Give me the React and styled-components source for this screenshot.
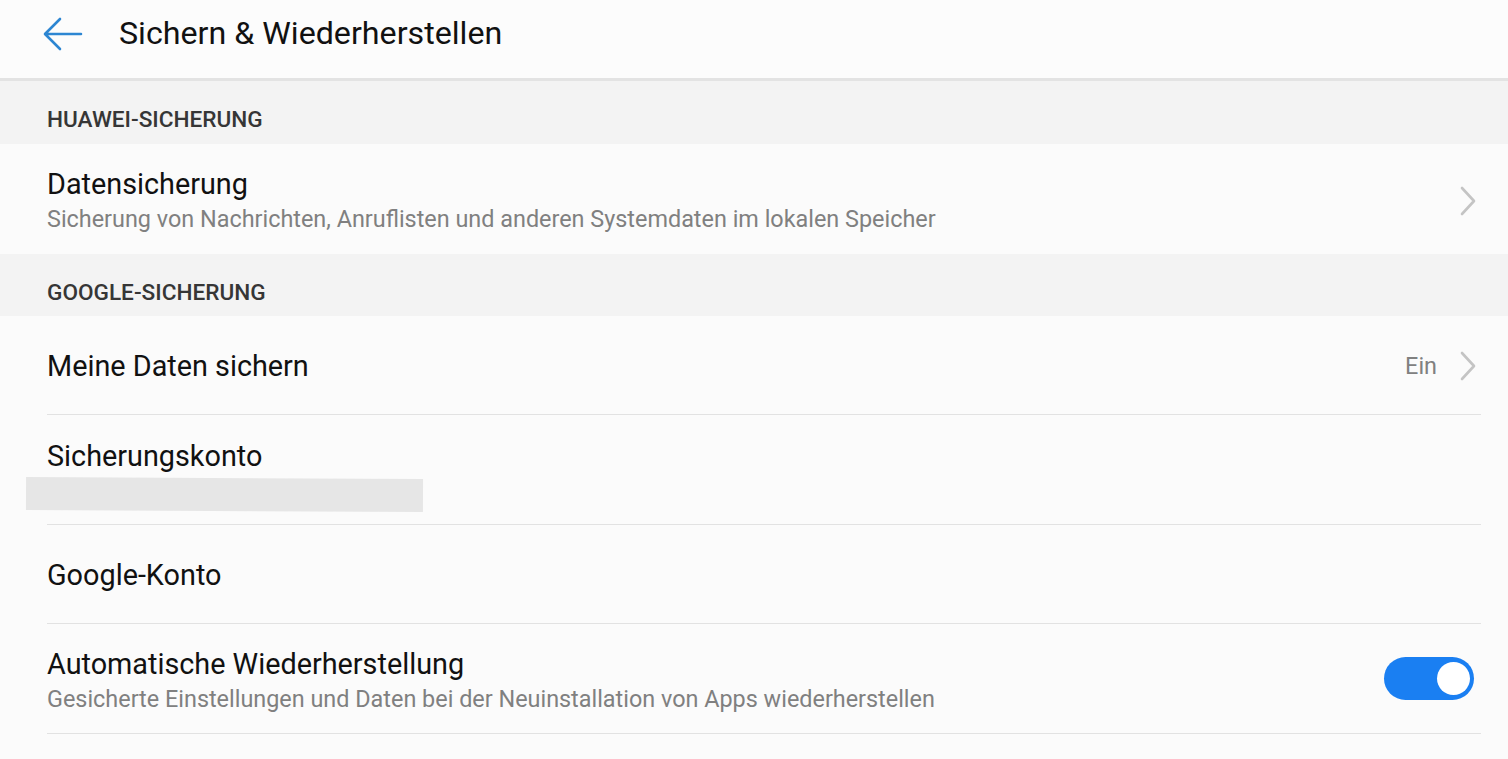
import React from "react";
import styled, { createGlobalStyle } from "styled-components";

const Global = createGlobalStyle`
  html, body { margin: 0; padding: 0; background: #fbfbfb; }
  body { font-family: Roboto, "Noto Sans", "Liberation Sans", sans-serif; }
`;

const Page = styled.div`
  width: 1508px;
  height: 759px;
  overflow: hidden;
  background: #fbfbfb;
`;

const Toolbar = styled.header`
  height: 78px;
  display: flex;
  align-items: center;
  background: #fcfcfc;
  border-bottom: 3px solid #e3e3e3;
  box-sizing: content-box;
`;

const BackButton = styled.button`
  border: 0;
  background: none;
  padding: 0;
  margin-left: 42px;
  width: 42px;
  height: 34px;
  display: flex;
  align-items: center;
  justify-content: center;
  margin-top: -10px;
`;

const Title = styled.h1`
  margin: -12px 0 0 35px;
  font-size: 32.2px;
  font-weight: 400;
  color: #111;
`;

const SectionHeader = styled.div`
  height: ${(p) => p.$h}px;
  background: #f3f3f3;
  display: flex;
  align-items: center;
  padding-left: 47px;
  padding-top: 14px;
  font-size: 22.6px;
  font-weight: 500;
  color: #363636;
  box-sizing: border-box;
`;

const Row = styled.div`
  height: ${(p) => p.$h}px;
  margin-left: 47px;
  margin-right: 27px;
  padding-top: ${(p) => p.$pt || 0}px;
  display: flex;
  align-items: center;
  border-bottom: ${(p) => (p.$divider ? "1px solid #e2e2e2" : "none")};
  box-sizing: border-box;
`;

const Texts = styled.div`
  flex: 1;
  display: flex;
  flex-direction: column;
  justify-content: center;
  min-width: 0;
`;

const RowTitle = styled.div`
  font-size: 28.8px;
  color: #111;
  line-height: 34px;
`;

const RowSub = styled.div`
  font-size: 23.4px;
  color: #808080;
  line-height: 30px;
  margin-top: 3px;
`;

const Value = styled.span`
  font-size: 23.4px;
  color: #808080;
  margin-right: 22px;
`;

const Chevron = styled.svg`
  width: 18px;
  height: 30px;
  margin-right: 4px;
`;

const Redacted = styled.div`
  margin-left: -21px;
  margin-top: 5px;
  width: 397px;
  height: 33px;
  background: #e6e6e6;
  transform: rotate(0.3deg);
`;

const Switch = styled.div`
  width: 90px;
  height: 43px;
  border-radius: 22px;
  background: #1a7ff2;
  position: relative;
  margin-right: 7px;
  margin-top: -${(p) => p.$lift || 0}px;
`;

const Knob = styled.div`
  position: absolute;
  right: 4px;
  top: 5px;
  width: 33px;
  height: 33px;
  border-radius: 50%;
  background: #fff;
`;

const ChevronIcon = () => (
  <Chevron viewBox="0 0 18 30">
    <path d="M3 2 L15 15 L3 28" fill="none" stroke="#c4c4c4" strokeWidth="2.6" strokeLinecap="round" strokeLinejoin="round" />
  </Chevron>
);

export default function App() {
  return (
    <Page>
      <Global />
      <Toolbar>
        <BackButton aria-label="Zurück">
          <svg width="40" height="34" viewBox="0 0 40 34">
            <path d="M38 17 H3 M17 2 L2 17 L17 32" fill="none" stroke="#2d86d2" strokeWidth="2.6" strokeLinecap="round" strokeLinejoin="round" />
          </svg>
        </BackButton>
        <Title>Sichern &amp; Wiederherstellen</Title>
      </Toolbar>
      <SectionHeader $h={63}>HUAWEI-SICHERUNG</SectionHeader>
      <Row $h={110} $pt={3}>
        <Texts>
          <RowTitle>Datensicherung</RowTitle>
          <RowSub>Sicherung von Nachrichten, Anruflisten und anderen Systemdaten im lokalen Speicher</RowSub>
        </Texts>
        <ChevronIcon />
      </Row>
      <SectionHeader $h={62}>GOOGLE-SICHERUNG</SectionHeader>
      <Row $h={99} $pt={1} $divider>
        <Texts>
          <RowTitle>Meine Daten sichern</RowTitle>
        </Texts>
        <Value>Ein</Value>
        <ChevronIcon />
      </Row>
      <Row $h={110} $pt={10} $divider>
        <Texts>
          <RowTitle>Sicherungskonto</RowTitle>
          <Redacted />
        </Texts>
      </Row>
      <Row $h={99} $pt={1} $divider>
        <Texts>
          <RowTitle>Google-Konto</RowTitle>
        </Texts>
      </Row>
      <Row $h={110} $pt={3} $divider>
        <Texts>
          <RowTitle>Automatische Wiederherstellung</RowTitle>
          <RowSub>Gesicherte Einstellungen und Daten bei der Neuinstallation von Apps wiederherstellen</RowSub>
        </Texts>
        <Switch $lift={3}>
          <Knob />
        </Switch>
      </Row>
    </Page>
  );
}
